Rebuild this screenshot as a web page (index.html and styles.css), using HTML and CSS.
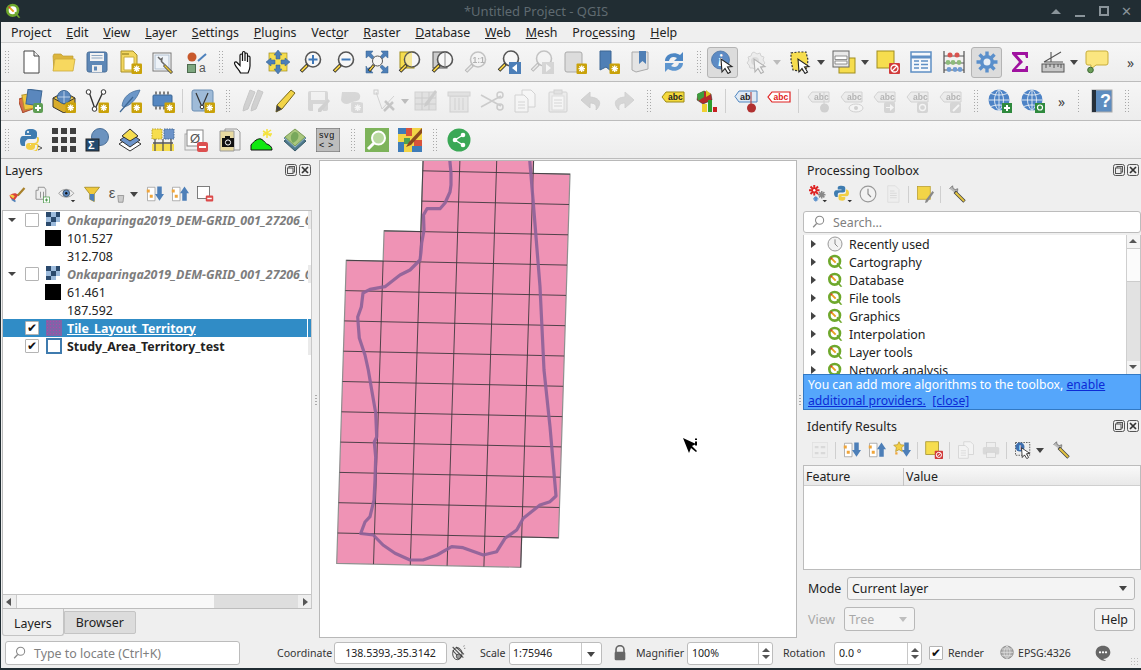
FILE: index.html
```html
<!DOCTYPE html>
<html lang="en">
<head>
    <meta charset="UTF-8">
    <title>*Untitled Project - QGIS</title>
    <link rel="stylesheet" href="styles.css">
</head>
<body>
<svg class="defs" xmlns="http://www.w3.org/2000/svg">
    <defs>
        <!-- shared pieces -->
        <g id="mag">
            <circle cx="14" cy="9.5" r="7.5" fill="#f7f7f7" stroke="#555" stroke-width="1.6"/>
            <path d="M8.5 15L2 21.5" stroke="#222" stroke-width="3.6"/>
            <path d="M8 15.5L2.5 21" stroke="#f2cf45" stroke-width="1.8"/>
        </g>
        <g id="gearbadge">
            <rect x="13.5" y="13.5" width="10.5" height="10.5" rx="1" fill="#c9a20a"/>
            <path d="M18.7 15.5v6.5M15.5 18.7h6.5M16.4 16.4l4.6 4.6M21 16.4l-4.6 4.6" stroke="#fff" stroke-width="1.3"/>
        </g>
        <g id="pointer">
            <path d="M10 9l1 13 3-3.500 3 5 2.500-1.500-3-5 4.500-.5z" fill="#fff" stroke="#222" stroke-width="1.100"/>
        </g>
        <g id="abc">
            <path d="M5 3h18v10H5L1 8z" fill="#f4d93c" stroke="#9c8a18"/>
            <text x="7" y="11" class="t8b">abc</text>
        </g>
        <g id="abcgray">
            <path d="M5 3h17v10H5L1 8z" fill="#ddd" stroke="#888"/>
            <text x="7" y="11" class="t8b">abc</text>
        </g>
        <g id="globe">
            <circle cx="11" cy="11" r="10.500" fill="#4d83c6"/>
            <path d="M11 .5v21M.5 11h21M3 4.500c5 2 11 2 16 0M3 17.500c5-2 11-2 16 0M11 .5c-6 5-6 16 0 21M11 .5c6 5 6 16 0 21" fill="none" stroke="#e8eef5" stroke-width=".9"/>
        </g>

        <!-- first toolbar -->
        <symbol id="new" viewBox="0 0 24 24"><path d="M5 1h10l5 5v17H5z" fill="#fff" stroke="#444"/><path d="M15 1v5h5" fill="#eee" stroke="#444"/></symbol>
        <symbol id="open" viewBox="0 0 24 24"><path d="M2 20L1 6l1-2h7l2 2h10v4H2z" fill="#dcb53c" stroke="#bd9c30" stroke-width=".7"/><path d="M1 21l2-12h20l-2 12z" fill="#f7d85f" stroke="#cba93a" stroke-width=".8"/></symbol>
        <symbol id="save" viewBox="0 0 24 24"><rect x="2" y="2" width="20" height="20" rx="2" fill="#5d87b6" stroke="#4a6f98"/><rect x="5" y="3" width="14" height="8" fill="#f3f3f3"/><path d="M6.500 5.500h11M6.500 8h11" stroke="#8da7c2"/><rect x="7" y="15" width="10" height="7" fill="#eee"/><rect x="9" y="16.500" width="3" height="4" fill="#5d87b6"/></symbol>
        <symbol id="saveas" viewBox="0 0 24 24"><path d="M3 1h12l4 4v17H3z" fill="#f3d75f" stroke="#a88f2b"/><path d="M6 7h10v13H6z" fill="#fff" stroke="#c9ad3f"/><path d="M4 3h7v2H4z" fill="#bba33a"/><use href="#gearbadge"/></symbol>
        <symbol id="props" viewBox="0 0 24 24"><rect x="2" y="3" width="18" height="18" fill="#fff" stroke="#777"/><rect x="4" y="5" width="14" height="14" fill="#eef3f8" stroke="#b0bfd0"/><path d="M7 7l2.500 2.500 1.500-1-.5 3 3 3" fill="none" stroke="#666" stroke-width="1.500"/><path d="M13 15l8 8" stroke="#444" stroke-width="3"/><path d="M13.500 15.500l7 7" stroke="#e7c53a" stroke-width="1.600"/></symbol>
        <symbol id="style" viewBox="0 0 24 24"><circle cx="8" cy="7" r="4.500" fill="#c8592c"/><path d="M14 11l8-7" stroke="#4e82bd" stroke-width="2"/><rect x="3.500" y="14.500" width="8" height="8" fill="#7ea77f" stroke="#4d6b4e"/><text x="15" y="22" class="t11">a</text></symbol>
        <symbol id="hand" viewBox="0 0 24 24"><path d="M7.500 23c-1-3-6-7-6-10 0-1.500 2-1.500 3 0l2.500 2.500V5.500c0-2 2.500-2 2.500 0V11V3c0-2 2.500-2 2.500 0v8V4.500c0-2 2.500-2 2.500 0V12V7.500c0-2 2.500-2 2.500 0V16c0 3-1 5-2 7z" fill="#fff" stroke="#111" stroke-width="1.200"/></symbol>
        <symbol id="pansel" viewBox="0 0 24 24"><rect x="3" y="3" width="18" height="18" fill="#f6dd4e" stroke="#a08d1f" stroke-width=".7"/><path d="M12 0l4 5h-2v4h-4V5H8zM12 24l4-5h-2v-4h-4v4H8zM0 12l5-4v2h4v4H5v2zM24 12l-5-4v2h-4v4h4v2z" fill="#4d7fb8" stroke="#35608f" stroke-width=".5"/></symbol>
        <symbol id="zin" viewBox="0 0 24 24"><use href="#mag"/><path d="M14 5v9M9.500 9.500h9" stroke="#3f78b8" stroke-width="2"/></symbol>
        <symbol id="zout" viewBox="0 0 24 24"><use href="#mag"/><path d="M9.500 9.500h9" stroke="#3f78b8" stroke-width="2"/></symbol>
        <symbol id="zfull" viewBox="0 0 24 24"><path d="M1 1h7L6 3.500 9 7 7 9 3.500 6 1 8zM23 1h-7l2 2.500L15 7l2 2 3.500-3L23 8zM23 23h-7l2-2.500-3-3.500 2-2 3.500 3 2.500-2zM1 23l7 0-2-2.500 1-1-2-2-2.500 1L1 16z" fill="#4d7fb8" stroke="#35608f" stroke-width=".5"/><circle cx="12.500" cy="11" r="5" fill="#f5f5f5" stroke="#555"/><path d="M9 15l-5 6" stroke="#222" stroke-width="3"/><path d="M8.500 15.500l-4 5" stroke="#f2cf45" stroke-width="1.500"/></symbol>
        <symbol id="zsel" viewBox="0 0 24 24"><rect x="2" y="2" width="14" height="16" fill="#f6dd4e" stroke="#a08d1f"/><use href="#mag"/><path d="M14 2.500a7 7 0 0 0 0 14z" fill="#f6dd4e" opacity=".55"/></symbol>
        <symbol id="zlayer" viewBox="0 0 24 24"><rect x="2" y="2" width="14" height="16" fill="#ccc" stroke="#555"/><use href="#mag"/><path d="M14 2v15" stroke="#888"/></symbol>
        <symbol id="z11" viewBox="0 0 24 24"><use href="#mag"/><text x="8.500" y="12.500" class="t8b">1:1</text></symbol>
        <symbol id="zlast" viewBox="0 0 24 24"><g transform="translate(0 -1)"><use href="#mag"/></g><rect x="12" y="12" width="12" height="12" fill="#4d7fb8"/><path d="M20 14l-5 4 5 4z" fill="#fff"/></symbol>
        <symbol id="znext" viewBox="0 0 24 24"><g transform="translate(0 -1)"><use href="#mag"/></g><rect x="12" y="12" width="12" height="12" fill="#999"/><path d="M16 14l5 4-5 4z" fill="#fff"/></symbol>
        <symbol id="mapview" viewBox="0 0 24 24"><rect x="2" y="2" width="17" height="20" rx="2" fill="#dcdcdc" stroke="#aaa"/><use href="#gearbadge"/></symbol>
        <symbol id="bookmark" viewBox="0 0 24 24"><path d="M4 1h11v20l-5-4-6 3z" fill="#4f7fb5" stroke="#3d6794"/><use href="#gearbadge"/></symbol>
        <symbol id="bookmarks" viewBox="0 0 24 24"><path d="M3 2h16v17l-12 3-4-2z" fill="#e4e4e4" stroke="#aaa"/><path d="M10 1h7v13l-3.500-3-3.500 3z" fill="#4f7fb5"/></symbol>
        <symbol id="refresh" viewBox="0 0 24 24"><path d="M3 11C3 4 12 1 18 5l3-3v9h-9l3-3c-4-2-7-1-8 3z" fill="#4d87c4"/><path d="M21 13c0 7-9 10-15 6l-3 3v-9h9l-3 3c4 2 7 1 8-3z" fill="#5e96cf"/></symbol>
        <symbol id="identify" viewBox="0 0 24 24"><circle cx="9.500" cy="10" r="9" fill="#5d8bc4" stroke="#3d6a9f" stroke-width=".7"/><text x="7" y="16" class="ti">i</text><use href="#pointer"/></symbol>
        <symbol id="run" viewBox="0 0 24 24"><path d="M10 2l3 2 3-1 1 3 3 1-1 3 2 3-2 2-1 3-3 0-3 2-3-2-3 0-1-3-2-2 2-3-1-3 3-1 1-3z" fill="#ddd" stroke="#888"/><circle cx="11" cy="11" r="4" fill="#aaa"/><use href="#pointer"/></symbol>
        <symbol id="select" viewBox="0 0 24 24"><path d="M3 3l7-1h8l2 8-1 8-7 3-7-1-2-9z" fill="#f6dd4e" stroke="#333" stroke-dasharray="2 1.500" stroke-width="1.200"/><use href="#pointer"/></symbol>
        <symbol id="selby" viewBox="0 0 24 24"><rect x="7" y="8" width="16" height="15" fill="#f6dd4e" stroke="#a08d1f"/><rect x="1" y="1" width="16" height="16" fill="#e9e9e9" stroke="#666"/><path d="M3 6h12v3.500H3zM3 11h12v3H3z" fill="#fff" stroke="#777" stroke-width=".8"/></symbol>
        <symbol id="deselect" viewBox="0 0 24 24"><rect x="1" y="1" width="17" height="17" fill="#f6dd4e" stroke="#a08d1f"/><rect x="13" y="13" width="11" height="11" rx="1" fill="#d13b3b"/><circle cx="18.500" cy="18.500" r="3.500" fill="none" stroke="#fff" stroke-width="1.300"/><path d="M16 21l5-5" stroke="#fff" stroke-width="1.300"/></symbol>
        <symbol id="table" viewBox="0 0 24 24"><rect x="2" y="2" width="20" height="20" fill="#f5f8fb" stroke="#5e8fc4" stroke-width="1.500"/><path d="M2 7h20" stroke="#5e8fc4" stroke-width="3"/><path d="M5 11h5M12 11h7M5 14.500h5M12 14.500h7M5 18h5M12 18h7" stroke="#5e8fc4" stroke-width="1.500"/></symbol>
        <symbol id="stats" viewBox="0 0 24 24"><path d="M2 1v22M22 1v22" stroke="#333"/><path d="M2 6h20M2 13h20M2 20h20" stroke="#555"/><g fill="#d9534f"><circle cx="8" cy="5" r="2.500"/><circle cx="15" cy="5" r="2.500"/></g><g fill="#8dbb7b"><circle cx="6" cy="12.500" r="2.400"/><circle cx="11" cy="12.500" r="2.400"/><circle cx="17" cy="12.500" r="2.400"/></g><g fill="#6f9bd1"><circle cx="7" cy="19.500" r="2.400"/><circle cx="13" cy="19.500" r="2.400"/><circle cx="18" cy="19.500" r="2.400"/></g></symbol>
        <symbol id="gear" viewBox="0 0 24 24"><path d="M12 1.500v21M1.500 12h21M4.500 4.500l15 15M19.500 4.500l-15 15" stroke="#5a8fcb" stroke-width="3.400"/><circle cx="12" cy="12" r="7" fill="#5a8fcb"/><circle cx="12" cy="12" r="3.500" fill="#e7eef6"/></symbol>
        <symbol id="sigma" viewBox="0 0 24 24"><path d="M4 2h16v6h-2l-1-3H9l6 7-7 7h9l1-3h2v6H4v-2l7-8-7-8z" fill="#a012a0"/></symbol>
        <symbol id="measure" viewBox="0 0 24 24"><path d="M3 12L20 2M10 2v10M3 12h19" stroke="#555" stroke-width="1.100" fill="none"/><rect x="1" y="14" width="22" height="8" fill="#c7c7c7" stroke="#555"/><path d="M5 14v4M9 14v3M13 14v4M17 14v3M20 14v4" stroke="#555"/></symbol>
        <symbol id="annot" viewBox="0 0 24 24"><path d="M3 1h18a2 2 0 0 1 2 2v10a2 2 0 0 1-2 2H11l-5 4v-4H3a2 2 0 0 1-2-2V3a2 2 0 0 1 2-2z" fill="#fbe680" stroke="#c7ad3a"/><circle cx="5.500" cy="20" r="2.800" fill="#6b9e58" stroke="#3e6a34"/></symbol>
        <!-- second toolbar -->
        <symbol id="dsm" viewBox="0 0 24 24"><rect x="1" y="8" width="12" height="14" transform="rotate(-20 7 15)" fill="#d86e4a" stroke="#a84c2e"/><rect x="4" y="5" width="13" height="15" transform="rotate(-10 10 12)" fill="#f0c640" stroke="#b3942b"/><rect x="8" y="1" width="14" height="15" transform="rotate(8 15 8)" fill="#5a87bd" stroke="#3d6794"/><rect x="14" y="14" width="10" height="10" rx="2" fill="#5f9e54"/><path d="M19 16v6M16 19h6" stroke="#fff" stroke-width="2"/></symbol>
        <symbol id="geopkg" viewBox="0 0 24 24"><path d="M1 9l11-6 11 6v9l-11 6-11-6z" fill="#d8ac2a" stroke="#333"/><path d="M1 9l11 6 11-6" fill="#f1d25a" stroke="#333"/><circle cx="12" cy="8" r="6.500" fill="#5a87bd" stroke="#3d6794"/><path d="M12 2v12M6 8h12" stroke="#cfe0f2" stroke-width=".8"/><use href="#gearbadge"/></symbol>
        <symbol id="newvec" viewBox="0 0 24 24"><path d="M4 3l6 17L18 3" fill="none" stroke="#333" stroke-width="1.400"/><circle cx="3.500" cy="3" r="2.300" fill="#fff" stroke="#333"/><circle cx="18.500" cy="3" r="2.300" fill="#fff" stroke="#333"/><circle cx="9.500" cy="20" r="2.300" fill="#fff" stroke="#333"/><use href="#gearbadge"/></symbol>
        <symbol id="feather" viewBox="0 0 24 24"><path d="M22 1C12 2 5 8 4 17l2 1c6-1 13-8 16-17z" fill="#6c97c8" stroke="#3d6794" stroke-width=".7"/><path d="M2 23L15 8" stroke="#3d6794" stroke-width="1.200"/><use href="#gearbadge"/></symbol>
        <symbol id="chip" viewBox="0 0 24 24"><rect x="2" y="6" width="19" height="11" rx="1" fill="#5587c1" stroke="#3d6794"/><path d="M5 2.500v3M9 2.500v3M13 2.500v3M17 2.500v3M5 17.500v3M9 17.500v3M13 17.500v3" stroke="#444" stroke-width="1.300"/><use href="#gearbadge"/></symbol>
        <symbol id="vlayer" viewBox="0 0 24 24"><rect x="1" y="1" width="21" height="21" rx="2" fill="#9fbbd8" stroke="#6b8eb3"/><path d="M5 4l6 14 6-14" fill="none" stroke="#333" stroke-width="1.200"/><circle cx="11" cy="18" r="1.800" fill="#fff" stroke="#333"/><use href="#gearbadge"/></symbol>
        <symbol id="edits" viewBox="0 0 24 24"><path d="M10 1l5 2-7 17-5 2 1-5zM18 1l5 2-7 17-5 2 1-5z" fill="#888" stroke="#666"/></symbol>
        <symbol id="pencil" viewBox="0 0 24 24"><path d="M18 1l4 3L9 20l-6 3 1-7z" fill="#f2d447" stroke="#77681c"/><path d="M4 16l5 4-6 3z" fill="#444"/></symbol>
        <symbol id="saveedit" viewBox="0 0 24 24"><rect x="2" y="2" width="20" height="20" rx="2" fill="#999"/><rect x="5" y="3" width="14" height="8" fill="#eee"/><rect x="7" y="15" width="10" height="7" fill="#eee"/><path d="M22 10l2 2-9 11h-3v-3z" fill="#888"/></symbol>
        <symbol id="addfeat" viewBox="0 0 24 24"><path d="M3 3h13c4 0 6 3 5 6-1 4-7 3-10 5-3 2-8 1-9-3z" fill="#999"/><rect x="12" y="13" width="10" height="10" rx="1" fill="#aaa"/><use href="#gearbadge"/></symbol>
        <symbol id="vertex" viewBox="0 0 24 24"><path d="M4 3l6 17L22 7" fill="none" stroke="#888"/><rect x="2" y="1" width="4" height="4" fill="none" stroke="#777"/><path d="M12 22l9-9M13 12l9 9" stroke="#666" stroke-width="2.500"/></symbol>
        <symbol id="modify" viewBox="0 0 24 24"><rect x="1" y="3" width="21" height="18" fill="#bbb" stroke="#888"/><path d="M1 9h21M1 15h21M8 3v18M15 3v18" stroke="#777"/><path d="M21 1l2 2-9 13-4 2 1-4z" fill="#777"/></symbol>
        <symbol id="del" viewBox="0 0 24 24"><rect x="3" y="7" width="18" height="16" fill="#ccc" stroke="#888"/><rect x="1" y="3" width="22" height="4" fill="#bbb" stroke="#888"/><path d="M8 9v12M12 9v12M16 9v12" stroke="#c77"/></symbol>
        <symbol id="cut" viewBox="0 0 24 24"><path d="M1 6l20 11M1 18L21 7" stroke="#777" stroke-width="1.600"/><circle cx="20" cy="6" r="3" fill="none" stroke="#777" stroke-width="1.500"/><circle cx="20" cy="18" r="3" fill="none" stroke="#777" stroke-width="1.500"/></symbol>
        <symbol id="copy" viewBox="0 0 24 24"><path d="M9 1h9l4 4v13H9z" fill="#fff" stroke="#888"/><path d="M2 6h9l4 4v13H2z" fill="#fff" stroke="#888"/><path d="M5 13h7M5 16h7M5 19h7" stroke="#999"/></symbol>
        <symbol id="paste" viewBox="0 0 24 24"><rect x="3" y="3" width="18" height="20" rx="1" fill="#ddd" stroke="#888"/><rect x="8" y="1" width="8" height="4" fill="#bbb" stroke="#888"/><rect x="6" y="7" width="12" height="14" fill="#fff" stroke="#aaa"/><path d="M8 11h8M8 14h8M8 17h8" stroke="#999"/></symbol>
        <symbol id="undo" viewBox="0 0 24 24"><path d="M11 3L2 11l9 8v-5c5 0 7 2 6 7 6-6 5-12-6-13z" fill="#a88" stroke="#877"/></symbol>
        <symbol id="redo" viewBox="0 0 24 24"><path d="M13 3l9 8-9 8v-5c-5 0-7 2-6 7-6-6-5-12 6-13z" fill="#999" stroke="#888"/></symbol>
        <symbol id="labely" viewBox="0 0 24 24"><use href="#abc"/></symbol>
        <symbol id="diagram" viewBox="0 0 24 24"><path d="M10 2l7 3 1 6-9 4-6-4 1-6z" fill="#b52a2a" stroke="#222" stroke-width=".5"/><path d="M3 5l7-3v6l-6 4z" fill="#3e9e3e"/><path d="M12 1l5 4-5 3z" fill="#e0c020"/><rect x="8" y="15" width="5" height="8" fill="#f0d030"/><rect x="14" y="11" width="4" height="12" fill="#2e9e2e"/><rect x="19" y="18" width="4" height="5" fill="#c62020"/></symbol>
        <symbol id="pinlabel" viewBox="0 0 24 24"><path d="M5 2h18v11H5L1 7.500z" fill="#dfe9f4" stroke="#4e85c0"/><text x="6" y="11" class="t9b">ab</text><path d="M17 3v12" stroke="#a33"/><circle cx="17.500" cy="19" r="4.500" fill="#b03030"/></symbol>
        <symbol id="redlabel" viewBox="0 0 24 24"><path d="M5 3h18v10H5L1 8z" fill="#fff" stroke="#e02020" stroke-width="1.200"/><text x="6.500" y="11" class="t8b red">abc</text></symbol>
        <symbol id="lab1" viewBox="0 0 24 24"><use href="#abcgray"/><path d="M17 3v12" stroke="#888"/><circle cx="17.500" cy="19" r="4.500" fill="#888"/></symbol>
        <symbol id="lab2" viewBox="0 0 24 24"><use href="#abcgray"/><ellipse cx="16" cy="19" rx="7" ry="4" fill="#fff" stroke="#888"/><circle cx="16" cy="19" r="2" fill="#888"/></symbol>
        <symbol id="lab3" viewBox="0 0 24 24"><use href="#abcgray"/><rect x="11" y="13" width="11" height="11" rx="2" fill="#999"/><path d="M13 18h4v-3l4 3.500-4 3.500v-3h-4z" fill="#fff"/></symbol>
        <symbol id="lab4" viewBox="0 0 24 24"><use href="#abcgray"/><rect x="11" y="13" width="11" height="11" rx="2" fill="#999"/><circle cx="16.500" cy="18.500" r="3" fill="none" stroke="#fff" stroke-width="1.300"/></symbol>
        <symbol id="lab5" viewBox="0 0 24 24"><use href="#abcgray"/><rect x="11" y="13" width="11" height="11" rx="2" fill="#999"/><path d="M14 22l6-6" stroke="#fff" stroke-width="2"/></symbol>
        <symbol id="globeplus" viewBox="0 0 24 24"><use href="#globe"/><rect x="14" y="14" width="10" height="10" fill="#2f8a3e"/><path d="M19 16v6M16 19h6" stroke="#fff" stroke-width="2"/></symbol>
        <symbol id="globezoom" viewBox="0 0 24 24"><use href="#globe"/><rect x="14" y="14" width="10" height="10" fill="#2f8a3e"/><circle cx="19" cy="18.500" r="2.500" fill="none" stroke="#fff" stroke-width="1.200"/></symbol>
        <symbol id="help" viewBox="0 0 24 24"><rect x="2" y="1" width="20" height="22" fill="#5d8cbf" stroke="#aaa"/><rect x="2" y="1" width="4" height="22" fill="#26303a"/><text x="10" y="18" class="t14b">?</text></symbol>
        <!-- third toolbar -->
        <symbol id="python" viewBox="0 0 24 24"><path d="M12 1c-5 0-6 2-6 4v2h6v1H4c-2 0-3 2-3 5s1 5 3 5h2v-3c0-2 2-4 4-4h5c2 0 3-1 3-3V5c0-2-2-4-6-4z" fill="#3f7cb0"/><path d="M12 23c5 0 6-2 6-4v-2h-6v-1h7l1 2-2 5z" fill="#f2cf45"/><path d="M18 9v3c0 2-1 3-3 3h-5c-2 0-3 1-3 3v1c0 2 2 3 5 3 2 0 4-1 4-3v-2h-5v-1h6c2 0 3-3 3-5s-1-2-2-2z" fill="#f2cf45"/><circle cx="9" cy="4" r="1.100" fill="#fff"/><path d="M19 18l4 2-4 2" fill="none" stroke="#555"/></symbol>
        <symbol id="grid" viewBox="0 0 24 24"><path d="M0 0h6v6H0zM9 0h6v6H9zM18 0h6v6h-6zM0 9h6v6H0zM9 9h6v6H9zM18 9h6v6h-6zM0 18h6v6H0zM9 18h6v6H9zM18 18h6v6h-6z" fill="#404040"/></symbol>
        <symbol id="sumlayer" viewBox="0 0 24 24"><circle cx="15" cy="9" r="8.500" fill="#6c93bf" stroke="#4a6f98"/><rect x="1" y="11" width="13" height="12" fill="#234a70" stroke="#222"/><text x="3" y="21" class="t11w">Σ</text></symbol>
        <symbol id="stack" viewBox="0 0 24 24"><path d="M12 9l11 7-11 7-11-7z" fill="#fff" stroke="#333"/><path d="M12 5l10 7-10 7-10-7z" fill="#6c93c9" stroke="#333"/><path d="M12 1l8 7-8 5-8-5z" fill="#f6dd4e" stroke="#333"/></symbol>
        <symbol id="hatch" viewBox="0 0 24 24"><rect x="1" y="1" width="10" height="10" fill="#f6dd4e" stroke="#b8a22c" stroke-dasharray="1.500 1"/><rect x="13" y="1" width="10" height="10" fill="#6c93c9" stroke="#4a6f98" stroke-dasharray="1.500 1"/><rect x="1" y="16" width="22" height="7" fill="#f6dd4e"/><path d="M4 11v12M12 11v12M20 11v12M2 15h20" stroke="#555" stroke-width="1.300"/></symbol>
        <symbol id="nullsym" viewBox="0 0 24 24"><rect x="1" y="6" width="16" height="16" fill="none" stroke="#aaa"/><rect x="3" y="2" width="16" height="16" fill="#fff" stroke="#888"/><text x="6" y="15" class="t13">Ø</text><rect x="13" y="14" width="11" height="10" rx="2" fill="#dc5050"/><path d="M15 19h7" stroke="#fff" stroke-width="2"/></symbol>
        <symbol id="camera" viewBox="0 0 24 24"><path d="M8 1h12l3 3v18H8z" fill="#eee" stroke="#999"/><path d="M3 3h14v20H3z" fill="#e7d9a0" stroke="#999"/><rect x="5" y="10" width="12" height="9" fill="#111"/><rect x="8" y="8" width="5" height="2" fill="#111"/><circle cx="11" cy="14.500" r="2.600" fill="none" stroke="#fff"/></symbol>
        <symbol id="hill" viewBox="0 0 24 24"><path d="M1 22v-5c3-4 7-7 10-6 3 1 4 5 8 6 2 1 3 3 3 5z" fill="#12e812" stroke="#111"/><path d="M17 1v9M13 3l8 5M21 2l-8 6M13 6h9" stroke="#f4e23c" stroke-width="1.500"/></symbol>
        <symbol id="layers3" viewBox="0 0 24 24"><path d="M12 6l11 7-11 10L1 13z" fill="#4d7a8c" stroke="#395a68"/><path d="M12 3l11 7-11 10L1 10z" fill="#8fb5c9" stroke="#5d8299"/><path d="M12 1l10 8-10 9L2 9z" fill="#a9c77e" stroke="#7f9f58"/><path d="M11 4c5-1 6 5 2 9l-3 2c-3-3-3-9 1-11z" fill="#78a85c"/></symbol>
        <symbol id="svgbox" viewBox="0 0 24 24"><rect x="0" y="0" width="24" height="24" fill="#bdbdbd" stroke="#666"/><text x="3" y="10" class="t9">svg</text><text x="3" y="20" class="t9">&lt; &gt;</text></symbol>
        <symbol id="greenmag" viewBox="0 0 24 24"><rect width="24" height="24" fill="#7db35a"/><circle cx="13.500" cy="10" r="6.500" fill="#b9d9a0" stroke="#fff" stroke-width="2"/><path d="M9 15l-6 6" stroke="#fff" stroke-width="3"/></symbol>
        <symbol id="palette" viewBox="0 0 24 24"><rect x="0" y="0" width="24" height="24" fill="#f2d447"/><path d="M0 0h8v6H0zM0 14h6v10H0zM14 18h10v6H14z" fill="#3f7cb8"/><path d="M8 0h6v8H8zM16 12h8v6h-8z" fill="#d9533a"/><path d="M6 10h6v6H6z" fill="#4fa24f"/><path d="M24 0L11 14l-3 5 5-2L24 5z" fill="#8a4a20"/></symbol>
        <symbol id="share" viewBox="0 0 24 24"><circle cx="12" cy="12" r="11.500" fill="#3aa856"/><path d="M16 7l-8 5 8 5" fill="none" stroke="#fff" stroke-width="1.400"/><circle cx="16" cy="7" r="2.300" fill="#fff"/><circle cx="8" cy="12" r="2.300" fill="#fff"/><circle cx="16" cy="17" r="2.300" fill="#fff"/></symbol>
        <!-- dock toolbars -->
        <symbol id="brush" viewBox="0 0 24 24"><path d="M2 14c5-4 8-4 12-1l-5 7c-3 1-6-2-7-6z" fill="#d9433a"/><path d="M2 14c3-2 5-1 7 1l-2 3z" fill="#f2cf45"/><path d="M13 14l9-10" stroke="#a8802a" stroke-width="3"/><path d="M5 19l5 3" stroke="#4d7fb8" stroke-width="2"/></symbol>
        <symbol id="addgroup" viewBox="0 0 24 24"><path d="M7 3h8l2 3v13H4V7h3z" fill="#eee" stroke="#777"/><path d="M10 9v8M14 9v8" stroke="#777"/><rect x="14" y="16" width="8" height="8" fill="#fff" stroke="#4e9a4e"/><path d="M18 18v4M16 20h4" stroke="#4e9a4e" stroke-width="1.500"/></symbol>
        <symbol id="eye" viewBox="0 0 24 24"><path d="M1 11c5-7 15-7 20 0-5 7-15 7-20 0z" fill="#eee" stroke="#888"/><circle cx="11" cy="11" r="4.500" fill="#5d8bc4" stroke="#345"/><circle cx="11" cy="11" r="1.600" fill="#111"/><path d="M17 20l3 3 3-3z" fill="#333"/></symbol>
        <symbol id="filter" viewBox="0 0 24 24"><path d="M2 3h20l-7 9v10l-6-3v-7z" fill="#efc93c" stroke="#9c8418"/><path d="M9 12h6v10l-6-3z" fill="#4d7fb8"/></symbol>
        <symbol id="epsilon" viewBox="0 0 24 24"><text x="1" y="17" class="t18">ε</text><path d="M13 14h8l-1 9h-6z" fill="#ccc" stroke="#888"/></symbol>
        <symbol id="expand" viewBox="0 0 24 24"><path d="M2 3h10v18H2z" fill="#fff" stroke="#999"/><rect x="1" y="6" width="4" height="4" fill="#f0a53a"/><rect x="5" y="13" width="4" height="4" fill="#f0a53a"/><path d="M16 2h6v10h3l-6 9-6-9h3z" fill="#4d7fb8" transform="translate(-1 0)"/></symbol>
        <symbol id="collapse" viewBox="0 0 24 24"><path d="M2 3h10v18H2z" fill="#fff" stroke="#999"/><rect x="1" y="6" width="4" height="4" fill="#f0a53a"/><rect x="5" y="13" width="4" height="4" fill="#f0a53a"/><path d="M15 21h6V11h3l-6-9-6 9h3z" fill="#4d7fb8"/></symbol>
        <symbol id="starexp" viewBox="0 0 24 24"><path d="M8 1l2 4 5 .5-3.500 3.500 1 5L8 11.500 3.500 14l1-5L1 5.500 6 5z" fill="#f2cf45" stroke="#b8962a"/><rect x="3" y="15" width="3" height="3" fill="#f0a53a"/><path d="M16 2h6v10h3l-6 9-6-9h3z" fill="#4d7fb8" transform="translate(-1 0)"/></symbol>
        <symbol id="remove" viewBox="0 0 24 24"><rect x="2" y="2" width="16" height="16" fill="#fff" stroke="#555"/><rect x="13" y="14" width="10" height="8" rx="1.500" fill="#dc4a4a"/><path d="M15 18h6" stroke="#fff" stroke-width="2"/></symbol>
        <symbol id="procgear" viewBox="0 0 24 24"><path d="M7 0v14M0 7h14M2 2l10 10M12 2L2 12" stroke="#d22" stroke-width="2.600"/><circle cx="7" cy="7" r="1.600" fill="#fff"/><path d="M17 8v10M12 13h10M13.500 9.500l7 7M20.500 9.500l-7 7" stroke="#888" stroke-width="2"/><path d="M9 15v7M5.500 18.500h7M7 16l4 5M11 16l-4 5" stroke="#5a8fcb" stroke-width="1.600"/><path d="M18 20l3 3 3-3z" fill="#333"/></symbol>
        <symbol id="pydd" viewBox="0 0 24 24"><path d="M10 1c-5 0-5 2-5 3v2h5v1H3c-2 0-3 2-3 4s1 5 3 5h2v-3c0-2 1-3 3-3h4c2 0 3-1 3-3V4c0-2-2-3-5-3z" fill="#3f7cb0"/><path d="M16 6v3c0 2-1 3-3 3H9c-2 0-3 1-3 3v3c0 2 2 3 5 3s4-2 4-3v-2h-5v-1h7c2 0 3-2 3-4s-1-5-3-5z" fill="#f2cf45"/><path d="M18 20l3 3 3-3z" fill="#333"/></symbol>
        <symbol id="clock" viewBox="0 0 24 24"><circle cx="12" cy="12" r="10.500" fill="#f2f2f2" stroke="#999" stroke-width="1.500"/><path d="M12 5v7l4 4" fill="none" stroke="#888" stroke-width="1.500"/></symbol>
        <symbol id="docsmall" viewBox="0 0 24 24"><path d="M5 1h10l5 5v17H5z" fill="#eee" stroke="#aaa"/><path d="M8 8h6M8 11h9M8 14h9M8 17h9" stroke="#aaa" stroke-width="1.400"/></symbol>
        <symbol id="note" viewBox="0 0 24 24"><rect x="2" y="2" width="17" height="17" fill="#f2d447" stroke="#b89c2c"/><path d="M22 8l2 2-9 13-3 1 1-4z" fill="#888"/></symbol>
        <symbol id="wrench" viewBox="0 0 24 24"><path d="M2 5l4-4 1 4 3 1 3-1c0 4-1 5-3 6" fill="#bbb" stroke="#666"/><path d="M9 9l13 13" stroke="#444" stroke-width="4.500"/><path d="M10 10l11.500 11.500" stroke="#e6c640" stroke-width="2.600"/></symbol>
        <symbol id="treeview" viewBox="0 0 24 24"><rect x="2" y="2" width="20" height="20" fill="#eee" stroke="#bbb"/><path d="M5 8h5M5 16h5M13 8h6M13 16h6" stroke="#aaa" stroke-width="3"/></symbol>
        <symbol id="print" viewBox="0 0 24 24"><rect x="6" y="2" width="12" height="7" fill="#eee" stroke="#888"/><rect x="1" y="8" width="22" height="10" rx="2" fill="#aaa"/><rect x="6" y="15" width="12" height="7" fill="#eee" stroke="#888"/></symbol>
        <symbol id="selid" viewBox="0 0 24 24"><rect x="2" y="2" width="19" height="17" fill="#eee" stroke="#333" stroke-dasharray="2 1.500"/><circle cx="8" cy="8" r="6" fill="#3d6fae"/><text x="6.500" y="12" class="t9w">i</text><use href="#pointer"/></symbol>
        <!-- status bar -->
        <symbol id="mouse" viewBox="0 0 24 24"><path d="M4 3l16 16M9 3l12 11M4 8l11 12" stroke="#555" stroke-width="1.600"/><ellipse cx="11" cy="13" rx="7" ry="9" fill="none" stroke="#333" stroke-width="1.300"/><circle cx="13" cy="17" r="3.500" fill="#999" stroke="#222"/><path d="M20 2l2-1M21 5l2 0" stroke="#555"/></symbol>
        <symbol id="lock" viewBox="0 0 24 24"><path d="M6 11V7a6 6 0 0 1 12 0v4" fill="none" stroke="#666" stroke-width="2.400"/><rect x="4" y="10" width="16" height="13" rx="2" fill="#666"/></symbol>
        <symbol id="wgs" viewBox="0 0 24 24"><circle cx="12" cy="11" r="9.500" fill="#aaa" stroke="#777"/><path d="M12 1.500v19M2.500 11h19M4 6h16M4 16h16M12 1.500c-6 5-6 14 0 19M12 1.500c6 5 6 14 0 19" fill="none" stroke="#eee" stroke-width=".9"/></symbol>
        <symbol id="chat" viewBox="0 0 24 24"><path d="M12 1c6 0 11 4 11 10s-5 10-11 10l5 3c-5 0-10-2-12-5-3-2-4-5-4-8C1 5 6 1 12 1z" fill="#666"/><circle cx="7.500" cy="11" r="1.700" fill="#fff"/><circle cx="12" cy="11" r="1.700" fill="#fff"/><circle cx="16.500" cy="11" r="1.700" fill="#fff"/></symbol>
        <symbol id="qlogo" viewBox="0 0 24 24"><circle cx="11.500" cy="11" r="8" fill="#fff" stroke="#6ea82c" stroke-width="4"/><path d="M7 7l6 6" stroke="#e8a020" stroke-width="3"/><circle cx="6.500" cy="6.500" r="1.600" fill="#d9472e"/><path d="M14 15l6 7h3l-7-9z" fill="#6ea82c"/></symbol>
        <symbol id="search" viewBox="0 0 24 24"><circle cx="13" cy="9" r="7" fill="none" stroke="#8a8a8a" stroke-width="1.800"/><path d="M8 14.500L2 21" stroke="#8a8a8a" stroke-width="2.200"/></symbol>
        <symbol id="raster" viewBox="0 0 16 16"><rect x="0" y="0" width="5" height="5" fill="#2b4a6d"/><rect x="5" y="5" width="5" height="5" fill="#2b4a6d"/><rect x="0" y="10" width="5" height="4" fill="#2b4a6d"/><rect x="10" y="0" width="4" height="5" fill="#2b4a6d"/><rect x="5" y="0" width="5" height="5" fill="#9dbbdc"/><rect x="0" y="5" width="5" height="5" fill="#9dbbdc"/><rect x="10" y="5" width="4" height="5" fill="#9dbbdc"/><rect x="5" y="10" width="5" height="4" fill="#9dbbdc"/></symbol>
        <pattern id="tile-dots" width="3" height="3" patternUnits="userSpaceOnUse"><rect width="3" height="3" fill="#8064a8"/><rect x="1" y="1" width="1" height="1" fill="#b545a8"/></pattern>
        <symbol id="dockfloat" viewBox="0 0 12 12"><rect x=".5" y=".5" width="11" height="11" rx="2" fill="#eee" stroke="#555"/><rect x="4" y="2.500" width="5.500" height="5.500" fill="none" stroke="#555"/><rect x="2.500" y="4" width="5.500" height="5.500" fill="#eee" stroke="#555"/></symbol>
        <symbol id="dockclose" viewBox="0 0 12 12"><rect x=".5" y=".5" width="11" height="11" rx="2" fill="#eee" stroke="#555"/><path d="M3 3l6 6M9 3l-6 6" stroke="#333" stroke-width="1.700"/></symbol>
    </defs>
</svg>

<div class="window">
    <div class="titlebar">
        <svg class="logo"><use href="#qlogo"/></svg>
        <div class="title">*Untitled Project - QGIS</div>
        <div class="wm">
            <span class="wm-up"></span>
            <span class="wm-min"></span>
            <span class="wm-max"></span>
            <span class="wm-close">✕</span>
        </div>
    </div>

    <div class="app">
        <div class="menubar">
            <span>Pro<u>j</u>ect</span>
            <span><u>E</u>dit</span>
            <span><u>V</u>iew</span>
            <span><u>L</u>ayer</span>
            <span><u>S</u>ettings</span>
            <span><u>P</u>lugins</span>
            <span>Vect<u>o</u>r</span>
            <span><u>R</u>aster</span>
            <span><u>D</u>atabase</span>
            <span><u>W</u>eb</span>
            <span><u>M</u>esh</span>
            <span>Pro<u>c</u>essing</span>
            <span><u>H</u>elp</span>
        </div>

        <div class="toolbar">
            <i class="grip first"></i>
            <b class="tool"><svg><use href="#new"/></svg></b>
            <b class="tool"><svg><use href="#open"/></svg></b>
            <b class="tool"><svg><use href="#save"/></svg></b>
            <b class="tool"><svg><use href="#saveas"/></svg></b>
            <b class="tool"><svg><use href="#props"/></svg></b>
            <b class="tool"><svg><use href="#style"/></svg></b>
            <i class="grip"></i>
            <b class="tool"><svg><use href="#hand"/></svg></b>
            <b class="tool"><svg><use href="#pansel"/></svg></b>
            <b class="tool"><svg><use href="#zin"/></svg></b>
            <b class="tool"><svg><use href="#zout"/></svg></b>
            <b class="tool"><svg><use href="#zfull"/></svg></b>
            <b class="tool"><svg><use href="#zsel"/></svg></b>
            <b class="tool"><svg><use href="#zlayer"/></svg></b>
            <b class="tool off"><svg><use href="#z11"/></svg></b>
            <b class="tool"><svg><use href="#zlast"/></svg></b>
            <b class="tool off"><svg><use href="#znext"/></svg></b>
            <b class="tool"><svg><use href="#mapview"/></svg></b>
            <b class="tool"><svg><use href="#bookmark"/></svg></b>
            <b class="tool"><svg><use href="#bookmarks"/></svg></b>
            <b class="tool"><svg><use href="#refresh"/></svg></b>
            <i class="grip"></i>
            <b class="tool on"><svg><use href="#identify"/></svg></b>
            <b class="tool off"><svg><use href="#run"/></svg></b>
            <i class="dd off"></i>
            <b class="tool"><svg><use href="#select"/></svg></b>
            <i class="dd"></i>
            <b class="tool"><svg><use href="#selby"/></svg></b>
            <i class="dd"></i>
            <b class="tool"><svg><use href="#deselect"/></svg></b>
            <b class="tool"><svg><use href="#table"/></svg></b>
            <b class="tool"><svg><use href="#stats"/></svg></b>
            <b class="tool on"><svg><use href="#gear"/></svg></b>
            <b class="tool"><svg><use href="#sigma"/></svg></b>
            <b class="tool"><svg><use href="#measure"/></svg></b>
            <i class="dd"></i>
            <b class="tool"><svg><use href="#annot"/></svg></b>
            <span class="more">»</span>
        </div>

        <div class="toolbar">
            <i class="grip first"></i>
            <b class="tool"><svg><use href="#dsm"/></svg></b>
            <b class="tool"><svg><use href="#geopkg"/></svg></b>
            <b class="tool"><svg><use href="#newvec"/></svg></b>
            <b class="tool"><svg><use href="#feather"/></svg></b>
            <b class="tool"><svg><use href="#chip"/></svg></b>
            <i class="sep"></i>
            <b class="tool"><svg><use href="#vlayer"/></svg></b>
            <i class="grip"></i>
            <b class="tool off"><svg><use href="#edits"/></svg></b>
            <b class="tool"><svg><use href="#pencil"/></svg></b>
            <b class="tool off"><svg><use href="#saveedit"/></svg></b>
            <b class="tool off"><svg><use href="#addfeat"/></svg></b>
            <b class="tool off"><svg><use href="#vertex"/></svg></b>
            <i class="dd off tight"></i>
            <b class="tool off"><svg><use href="#modify"/></svg></b>
            <b class="tool off"><svg><use href="#del"/></svg></b>
            <b class="tool off"><svg><use href="#cut"/></svg></b>
            <b class="tool off"><svg><use href="#copy"/></svg></b>
            <b class="tool off"><svg><use href="#paste"/></svg></b>
            <b class="tool off"><svg><use href="#undo"/></svg></b>
            <b class="tool off"><svg><use href="#redo"/></svg></b>
            <i class="grip"></i>
            <b class="tool"><svg><use href="#labely"/></svg></b>
            <b class="tool"><svg><use href="#diagram"/></svg></b>
            <i class="sep"></i>
            <b class="tool"><svg><use href="#pinlabel"/></svg></b>
            <b class="tool"><svg><use href="#redlabel"/></svg></b>
            <i class="sep"></i>
            <b class="tool off"><svg><use href="#lab1"/></svg></b>
            <b class="tool off"><svg><use href="#lab2"/></svg></b>
            <b class="tool off"><svg><use href="#lab3"/></svg></b>
            <b class="tool off"><svg><use href="#lab4"/></svg></b>
            <b class="tool off"><svg><use href="#lab5"/></svg></b>
            <i class="grip"></i>
            <b class="tool"><svg><use href="#globeplus"/></svg></b>
            <b class="tool"><svg><use href="#globezoom"/></svg></b>
            <span class="more mid">»</span>
            <i class="grip tiny"></i>
            <b class="tool"><svg><use href="#help"/></svg></b>
            <i class="grip"></i>
        </div>

        <div class="toolbar short">
            <i class="grip first"></i>
            <b class="tool"><svg><use href="#python"/></svg></b>
            <b class="tool"><svg><use href="#grid"/></svg></b>
            <b class="tool"><svg><use href="#sumlayer"/></svg></b>
            <b class="tool"><svg><use href="#stack"/></svg></b>
            <b class="tool"><svg><use href="#hatch"/></svg></b>
            <b class="tool"><svg><use href="#nullsym"/></svg></b>
            <b class="tool"><svg><use href="#camera"/></svg></b>
            <b class="tool"><svg><use href="#hill"/></svg></b>
            <b class="tool"><svg><use href="#layers3"/></svg></b>
            <b class="tool"><svg><use href="#svgbox"/></svg></b>
            <i class="grip"></i>
            <b class="tool"><svg><use href="#greenmag"/></svg></b>
            <b class="tool"><svg><use href="#palette"/></svg></b>
            <i class="grip"></i>
            <b class="tool"><svg><use href="#share"/></svg></b>
        </div>

        <div class="main">
            <div class="dock left-dock">
                <div class="dock-title">
                    <span>Layers</span>
                    <svg><use href="#dockfloat"/></svg>
                    <svg><use href="#dockclose"/></svg>
                </div>
                <div class="dock-tools layers-tools">
                    <b class="mini"><svg><use href="#brush"/></svg></b>
                    <b class="mini"><svg><use href="#addgroup"/></svg></b>
                    <b class="mini"><svg><use href="#eye"/></svg></b>
                    <b class="mini"><svg><use href="#filter"/></svg></b>
                    <b class="mini"><svg><use href="#epsilon"/></svg></b>
                    <i class="dd small"></i>
                    <b class="mini"><svg><use href="#expand"/></svg></b>
                    <b class="mini"><svg><use href="#collapse"/></svg></b>
                    <b class="mini"><svg><use href="#remove"/></svg></b>
                </div>
                <div class="layer-box">
                    <div class="layer-rows">
                        <div class="row layer">
                            <i class="twist"></i><i class="check"></i>
                            <svg class="swatch"><use href="#raster"/></svg>
                            <span class="name dim">Onkaparinga2019_DEM-GRID_001_27206_0001</span>
                        </div>
                        <div class="row"><i class="black"></i><span>101.527</span></div>
                        <div class="row"><i class="blank"></i><span>312.708</span></div>
                        <div class="row layer">
                            <i class="twist"></i><i class="check"></i>
                            <svg class="swatch"><use href="#raster"/></svg>
                            <span class="name dim">Onkaparinga2019_DEM-GRID_001_27206_0002</span>
                        </div>
                        <div class="row"><i class="black"></i><span>61.461</span></div>
                        <div class="row"><i class="blank"></i><span>187.592</span></div>
                        <div class="row layer picked">
                            <i class="notwist"></i><i class="check yes">✔</i>
                            <svg class="swatch" viewBox="0 0 16 16"><rect width="16" height="16" fill="url(#tile-dots)"/></svg>
                            <span class="name"><u>Tile_Layout_Territory</u></span>
                        </div>
                        <div class="row layer">
                            <i class="notwist"></i><i class="check yes">✔</i>
                            <i class="swatch outline"></i>
                            <span class="name">Study_Area_Territory_test</span>
                        </div>
                    </div>
                    <div class="hscroll">
                        <i class="arrow-left"></i>
                        <i class="hthumb"></i>
                        <i class="hgroove"></i>
                        <i class="arrow-right"></i>
                    </div>
                </div>
                <div class="tabs">
                    <span class="tab active">Layers</span>
                    <span class="tab">Browser</span>
                </div>
            </div>

            <div class="splitter"><i></i></div>

            <div class="canvas">
                <svg class="map" viewBox="320 161 476 476">
                    <path class="tiles" d="M423.7 140.7L534.1 143.1L533.2 173.4L570 174.2L558.5 537.800L521.700 537L520.700 567.300L336.700 563.300L346.300 260.300L383.100 261.100L384.100 230.800L420.900 231.600Z"/>
                    <path class="grid" d="M422.700 170.800L570 174.200M421.800 201.100L569 204.500M384.100 230.800L568 234.800M346.300 260.300L567 265.100M345.300 290.600L566 295.400M344.400 320.900L565.100 325.700M343.400 351.200L564.100 356M342.500 381.500L563.100 386.300M341.500 411.800L562.200 416.600M340.500 442.100L561.200 446.900M339.600 472.400L560.200 477.200M338.600 502.700L559.300 507.500M337.700 533L558.500 537.800M383.100 261.100L373.500 564.100"/>
                    <path class="grid" d="M423.700 140.700L410.300 564.900M460.500 141.500L447.100 565.700M497.300 142.300L483.900 566.500M534.100 143.100L520.700 567.300"/>
                    <path class="study" d="M449.300 155L451 173L451 185L450 192L445 203L440 208.700L427 208.700L423.500 215L424 230L421.700 243L421 252L420 260L410 270L400 275L385 286.700L370 289.300L363 293L361.300 307L357.700 317L358.500 328L359.300 338L365 355L368.300 370L371.700 390L375.700 413L376.700 437L374.300 442L375.700 457L375 480L374 500L370 516.700L365 522L360.700 533.500L373.300 535L383 545L395 553.300L410 560L423 560L437 555L451.700 546.700L463 547.700L483.300 555L496.700 551.700L505 538.300L516.700 530L523.300 518.300L540 505L550 501.700L556 496L550 426.700L544 370L540 286.700L533.300 203L529.300 155"/>
                </svg>
                <div class="mouse-cursor">
                    <svg viewBox="0 0 16 16"><path d="M1 1l6 15 2-5 5 4 1-1-5-5 4-2z" fill="#000"/><path d="M13 1.500h2v1.500h-2zM13 4.500h2v4h-2z" fill="#000"/></svg>
                </div>
            </div>

            <div class="splitter right"><i></i></div>

            <div class="dock right-dock">
                <div class="dock-title">
                    <span>Processing Toolbox</span>
                    <svg><use href="#dockfloat"/></svg>
                    <svg><use href="#dockclose"/></svg>
                </div>
                <div class="dock-tools proc-tools">
                    <b class="mini"><svg><use href="#procgear"/></svg></b>
                    <b class="mini"><svg><use href="#pydd"/></svg></b>
                    <b class="mini"><svg><use href="#clock"/></svg></b>
                    <b class="mini off"><svg><use href="#docsmall"/></svg></b>
                    <i class="sep slim"></i>
                    <b class="mini"><svg><use href="#note"/></svg></b>
                    <i class="sep slim"></i>
                    <b class="mini"><svg><use href="#wrench"/></svg></b>
                </div>
                <div class="searchbox">
                    <svg><use href="#search"/></svg>
                    <span>Search…</span>
                </div>
                <div class="algos">
                    <div class="algo-list">
                        <div class="algo"><i class="twist closed"></i><svg><use href="#clock"/></svg><span>Recently used</span></div>
                        <div class="algo"><i class="twist closed"></i><svg><use href="#qlogo"/></svg><span>Cartography</span></div>
                        <div class="algo"><i class="twist closed"></i><svg><use href="#qlogo"/></svg><span>Database</span></div>
                        <div class="algo"><i class="twist closed"></i><svg><use href="#qlogo"/></svg><span>File tools</span></div>
                        <div class="algo"><i class="twist closed"></i><svg><use href="#qlogo"/></svg><span>Graphics</span></div>
                        <div class="algo"><i class="twist closed"></i><svg><use href="#qlogo"/></svg><span>Interpolation</span></div>
                        <div class="algo"><i class="twist closed"></i><svg><use href="#qlogo"/></svg><span>Layer tools</span></div>
                        <div class="algo"><i class="twist closed"></i><svg><use href="#qlogo"/></svg><span>Network analysis</span></div>
                    </div>
                    <div class="vscroll">
                        <i class="arrow-up"></i>
                        <i class="vthumb"></i>
                        <i class="vgroove"></i>
                        <i class="arrow-down"></i>
                    </div>
                </div>
                <div class="hint">You can add more algorithms to the toolbox, <a>enable additional providers.</a> &nbsp;<a>[close]</a></div>
                <div class="split-h"></div>
                <div class="dock-title second">
                    <span>Identify Results</span>
                    <svg><use href="#dockfloat"/></svg>
                    <svg><use href="#dockclose"/></svg>
                </div>
                <div class="dock-tools ident-tools">
                    <b class="mini off"><svg><use href="#treeview"/></svg></b>
                    <i class="sep slim"></i>
                    <b class="mini"><svg><use href="#expand"/></svg></b>
                    <b class="mini"><svg><use href="#collapse"/></svg></b>
                    <b class="mini"><svg><use href="#starexp"/></svg></b>
                    <i class="sep slim"></i>
                    <b class="mini"><svg><use href="#deselect"/></svg></b>
                    <i class="sep slim"></i>
                    <b class="mini off"><svg><use href="#copy"/></svg></b>
                    <b class="mini off"><svg><use href="#print"/></svg></b>
                    <i class="sep slim"></i>
                    <b class="mini"><svg><use href="#selid"/></svg></b>
                    <i class="dd small"></i>
                    <b class="mini"><svg><use href="#wrench"/></svg></b>
                </div>
                <div class="results">
                    <div class="results-head">
                        <span class="col-feature">Feature</span>
                        <span>Value</span>
                    </div>
                </div>
                <div class="mode-row">
                    <label>Mode</label>
                    <div class="combo wide"><span>Current layer</span><i class="dd"></i></div>
                </div>
                <div class="view-row">
                    <label class="faded">View</label>
                    <div class="combo narrow faded"><span>Tree</span><i class="dd off"></i></div>
                    <div class="help-btn">Help</div>
                </div>
            </div>
        </div>

        <div class="statusbar">
            <div class="locator">
                <svg><use href="#search"/></svg>
                <span>Type to locate (Ctrl+K)</span>
            </div>
            <span class="lbl coord-lbl">Coordinate</span>
            <div class="field coord">138.5393,-35.3142</div>
            <svg class="st-icon mouse-ic"><use href="#mouse"/></svg>
            <span class="lbl scale-lbl">Scale</span>
            <div class="field scale"><span>1:75946</span><i class="dd"></i></div>
            <svg class="st-icon lock-ic"><use href="#lock"/></svg>
            <span class="lbl magn-lbl">Magnifier</span>
            <div class="field spin magn"><span>100%</span><em><i class="up"></i><i class="down"></i></em></div>
            <span class="lbl rot-lbl">Rotation</span>
            <div class="field spin rot"><span>0.0 °</span><em><i class="up"></i><i class="down"></i></em></div>
            <i class="check yes render-check">✔</i>
            <span class="lbl render-lbl">Render</span>
            <svg class="st-icon wgs-ic"><use href="#wgs"/></svg>
            <span class="lbl epsg">EPSG:4326</span>
            <svg class="st-icon chat-ic"><use href="#chat"/></svg>
            <i class="size-grip"></i>
        </div>
    </div>
</div>
</body>
</html>
```

FILE: styles.css
```css
* {
    margin: 0;
    padding: 0;
    box-sizing: border-box;
}

html, body {
    width: 1141px;
    height: 670px;
    overflow: hidden;
}

body {
    background: #212d33;
    font-family: "Noto Sans", sans-serif;
    font-size: 12.4px;
    color: #222;
}

.defs {
    display: block;
    width: 0;
    height: 0;
}

i, b {
    font-style: normal;
    font-weight: normal;
}

svg text {
    font-family: "Liberation Sans", sans-serif;
}

.t8b { font-size: 8.5px; font-weight: bold; fill: #222; }
.t8b.red { fill: #e02020; }
.t9 { font-size: 9px; fill: #111; letter-spacing: .6px; }
.t9b { font-size: 9px; font-weight: bold; fill: #222; }
.t9w { font-size: 9px; font-weight: bold; fill: #fff; }
.t11 { font-size: 12px; fill: #555; }
.t11w { font-size: 11px; font-weight: bold; fill: #fff; }
.t13 { font-size: 13px; fill: #555; }
.t14b { font-size: 18px; font-weight: bold; fill: #fff; }
.t18 { font-size: 20px; fill: #555; }
.ti { font-family: "Liberation Serif", serif; font-size: 16px; font-weight: bold; font-style: italic; fill: #fff; }

.window {
    width: 1141px;
    height: 670px;
    display: flex;
    flex-direction: column;
}

/* title bar */
.titlebar {
    height: 22px;
    display: flex;
    align-items: center;
    color: #5f6a70;
}

.logo {
    width: 16px;
    height: 16px;
    margin: 0 5px;
}

.title {
    flex: 1;
    text-align: center;
    font-size: 13px;
}

.wm {
    width: 95px;
    display: flex;
    align-items: center;
    position: relative;
    height: 22px;
    color: #8a949a;
}

.wm-up {
    margin-left: 5px;
    width: 0;
    height: 0;
    border-left: 5px solid transparent;
    border-right: 5px solid transparent;
    border-bottom: 5px solid #8a949a;
}

.wm-min {
    margin-left: 14px;
    margin-top: 9px;
    width: 10px;
    height: 2px;
    background: #8a949a;
}

.wm-max {
    margin-left: 14px;
    width: 10px;
    height: 10px;
    border: 2px solid #8a949a;
}

.wm-close {
    margin-left: 12px;
    font-size: 13px;
    line-height: 1;
}

/* app frame */
.app {
    flex: 1;
    margin-left: 1px;
    margin-bottom: 2px;
    background: #efefef;
    display: flex;
    flex-direction: column;
    min-height: 0;
}

.menubar {
    height: 21px;
    display: flex;
    padding-left: 2.600px;
    align-items: center;
    border-bottom: 1px solid #cfcfcf;
    background: #efefef;
}

.menubar span {
    padding: 0 7.400px;
}

.toolbar {
    height: 39px;
    flex: none;
    display: flex;
    align-items: center;
    background: linear-gradient(#f6f6f6, #ededed);
    border-bottom: 1px solid #bcbcbc;
}

.toolbar.short {
    height: 38px;
}

.tool {
    width: 33px;
    height: 31px;
    flex: none;
    display: flex;
    align-items: center;
    justify-content: center;
}

.tool svg {
    width: 24px;
    height: 24px;
}

.tool.on {
    background: #dcdcdc;
    border: 1px solid #b4b4b4;
    border-radius: 3px;
    margin: 0 1px;
    width: 31px;
}

.off {
    opacity: .3;
    filter: grayscale(1);
}

.grip {
    flex: none;
    width: 16px;
    height: 24px;
    background: radial-gradient(circle, #a8a8a8 .7px, transparent .9px) 0 0 / 3px 3px;
    background-clip: content-box;
    padding: 0 5px;
}

.grip.first {
    width: 13px;
    padding: 0 4px;
}

.grip.tiny {
    width: 14px;
}

.sep {
    flex: none;
    width: 7px;
    height: 24px;
    border-right: 3px solid transparent;
    border-left: 3px solid transparent;
    background: #cfcfcf;
    background-clip: padding-box;
}

.sep.slim {
    height: 17px;
}

.dd {
    flex: none;
    width: 11px;
    height: 5px;
    display: block;
    position: relative;
}

.dd::after {
    content: "";
    position: absolute;
    left: 1px;
    top: 0;
    border-left: 4px solid transparent;
    border-right: 4px solid transparent;
    border-top: 5px solid #444;
}

.dd.tight {
    width: 9px;
}

.more {
    margin-left: 7px;
    width: 22px;
    text-align: center;
    font-size: 14px;
    color: #444;
}

.more.mid {
    margin-left: 3px;
    width: 19px;
}

/* main area */
.main {
    flex: 1;
    display: flex;
    min-height: 0;
}

.dock {
    flex: none;
    display: flex;
    flex-direction: column;
}

.left-dock {
    width: 312px;
}

.right-dock {
    width: 338px;
}

.dock-title {
    height: 22px;
    flex: none;
    display: flex;
    align-items: center;
    gap: 2px;
    padding-left: 4px;
    padding-right: 2px;
}

.right-dock .dock-title {
    padding-left: 4px;
    padding-right: 2px;
    gap: 2px;
}

.dock-title span {
    flex: 1;
}

.dock-title svg {
    width: 12px;
    height: 12px;
}

.dock-tools {
    height: 26px;
    flex: none;
    display: flex;
    align-items: center;
}

.mini {
    width: 25px;
    height: 22px;
    flex: none;
    display: flex;
    align-items: center;
    justify-content: center;
}

.mini svg {
    width: 18px;
    height: 18px;
}

.layers-tools {
    padding-left: 3px;
}

.dd.small {
    width: 13px;
}

.proc-tools {
    padding-left: 2px;
}

.proc-tools .sep,
.ident-tools .sep {
    width: 7px;
}

.ident-tools {
    padding-left: 4px;
}

.layer-box {
    margin-top: 3px;
    margin-left: 1px;
    width: 310px;
    height: 399px;
    flex: none;
    background: #fff;
    border: 1px solid #bdbdbd;
    border-right-color: #c8c8c8;
    display: flex;
    flex-direction: column;
}

.layer-rows {
    flex: 1;
    min-height: 0;
    overflow: hidden;
}

.row {
    height: 18px;
    display: flex;
    align-items: center;
    white-space: nowrap;
    overflow: hidden;
}

.row.layer {
    border-right: 3px solid #eaeaea;
}

.twist {
    flex: none;
    display: block;
    width: 0;
    height: 0;
    margin-left: 5px;
    margin-right: 9px;
    border-left: 4px solid transparent;
    border-right: 4px solid transparent;
    border-top: 4px solid #444;
}

.notwist {
    flex: none;
    width: 22px;
}

.check {
    flex: none;
    width: 14px;
    height: 14px;
    background: #fff;
    border: 1px solid #b4b4b4;
    border-radius: 1px;
    font-size: 12px;
    line-height: 12px;
    text-align: center;
    color: #111;
}

.swatch {
    flex: none;
    width: 16px;
    height: 16px;
    margin-left: 7px;
    margin-right: 5px;
}

.swatch.outline {
    border: 2px solid #3f7bae;
    background: #fff;
}

.black {
    flex: none;
    width: 16px;
    height: 16px;
    background: #000;
    margin-left: 42px;
    margin-right: 6px;
}

.blank {
    flex: none;
    width: 64px;
}

.name {
    font-weight: bold;
}

.name.dim {
    font-style: italic;
    color: #7d7d7d;
}

.row.picked {
    background: #308cc6;
    color: #fff;
    border-right: 3px solid #308cc6;
    box-shadow: inset -1px 0 #fff;
}

.hscroll {
    height: 14px;
    flex: none;
    display: flex;
    align-items: center;
    border-top: 1px solid #c4c4c4;
    background: #eee;
}

.hthumb {
    width: 198px;
    height: 13px;
    background: #f8f8f8;
    border-left: 1px solid #ccc;
    margin-left: 1px;
}

.hgroove {
    width: 84px;
    height: 13px;
    background: #dedede;
}

.arrow-left {
    margin-left: 3px;
    border-top: 4px solid transparent;
    border-bottom: 4px solid transparent;
    border-right: 5px solid #555;
    margin-right: 4px;
}

.arrow-right {
    margin-left: 5px;
    border-top: 4px solid transparent;
    border-bottom: 4px solid transparent;
    border-left: 5px solid #555;
}

.tabs {
    display: flex;
    align-items: flex-start;
    padding-left: 1px;
}

.tab {
    height: 23px;
    margin-top: 2px;
    padding: 0 11px;
    line-height: 22px;
    background: #dcdcdc;
    border: 1px solid #c4c4c4;
    border-radius: 0 2px 2px 0;
}

.tab.active {
    height: 27px;
    margin-top: 0;
    padding-top: 3px;
    line-height: 24px;
    background: #efefef;
    border-top: 0;
    border-radius: 0 0 3px 3px;
}

.splitter {
    width: 6px;
    flex: none;
    display: flex;
    align-items: center;
    justify-content: center;
}

.splitter i {
    display: block;
    width: 2px;
    height: 12px;
    background: radial-gradient(circle, #aaa .7px, transparent .9px) 0 0 / 2px 3px;
}

.canvas {
    width: 478px;
    height: 478px;
    margin-top: 1px;
    flex: none;
    background: #fff;
    border: 1px solid #b8b8b8;
    position: relative;
    overflow: hidden;
}

.map {
    display: block;
    width: 476px;
    height: 476px;
}

.tiles {
    fill: #ef93b5;
    stroke: #8f8f8f;
    stroke-width: 1.200;
}

.grid {
    fill: none;
    stroke: #3f383e;
    stroke-width: 1;
    stroke-opacity: .9;
}

.study {
    fill: none;
    stroke: #8e6299;
    stroke-width: 3.200;
    stroke-linejoin: round;
    stroke-opacity: .92;
}

.mouse-cursor {
    position: absolute;
    left: 362px;
    top: 276px;
    width: 16px;
    height: 16px;
}

.mouse-cursor svg {
    display: block;
    width: 16px;
    height: 16px;
}

/* right dock */
.searchbox {
    margin-top: 4px;
    height: 22px;
    flex: none;
    display: flex;
    align-items: center;
    background: #fff;
    border: 1px solid #bcbcbc;
    border-radius: 3px;
    color: #808080;
}

.searchbox svg {
    width: 14px;
    height: 14px;
    margin-left: 8px;
    margin-right: 7px;
}

.algos {
    margin-top: 2px;
    height: 139px;
    flex: none;
    display: flex;
    background: #fff;
    border-left: 1px solid #c4c4c4;
    border-right: 1px solid #c4c4c4;
    overflow: hidden;
}

.algo-list {
    flex: 1;
    min-width: 0;
}

.algo {
    height: 18px;
    display: flex;
    align-items: center;
    white-space: nowrap;
}

.algo svg {
    width: 16px;
    height: 16px;
    margin-left: 11px;
    margin-right: 6px;
    flex: none;
}

.twist.closed {
    margin-left: 7px;
    margin-right: 0;
    border-top: 4px solid transparent;
    border-bottom: 4px solid transparent;
    border-left: 5px solid #444;
    border-right: 0;
}

.vscroll {
    width: 14px;
    flex: none;
    display: flex;
    flex-direction: column;
    align-items: center;
    border-left: 1px solid #cfcfcf;
    background: #e2e2e2;
}

.arrow-up,
.arrow-down {
    display: block;
    width: 100%;
    height: 13px;
    background: #f4f4f4;
    position: relative;
}

.arrow-up::after,
.arrow-down::after {
    content: "";
    position: absolute;
    left: 2px;
    top: 4px;
    border-left: 4px solid transparent;
    border-right: 4px solid transparent;
}

.arrow-up::after {
    border-bottom: 4px solid #555;
}

.arrow-down::after {
    border-top: 4px solid #555;
}

.vthumb {
    width: 100%;
    height: 34px;
    background: #fbfbfb;
    border-bottom: 1px solid #ccc;
    border-top: 1px solid #ccc;
}

.vgroove {
    flex: 1;
}

.hint {
    height: 36px;
    flex: none;
    padding: 2px 3px 0 4px;
    font-size: 12.200px;
    line-height: 15.500px;
    color: #fff;
    background: #55a6fb;
    border: 1px solid #3279c4;
}

.hint a {
    color: #0c2bd6;
    text-decoration: underline;
}

.split-h {
    height: 5px;
    flex: none;
}

.dock-title.second {
    height: 22px;
}

.results {
    margin-top: 2px;
    height: 105px;
    flex: none;
    background: #fff;
    border: 1px solid #bcbcbc;
}

.results-head {
    height: 20px;
    display: flex;
    align-items: center;
    background: linear-gradient(#f9f9f9, #e9e9e9);
    border-bottom: 1px solid #cfcfcf;
    padding-left: 2px;
    padding-top: 2px;
}

.col-feature {
    width: 98px;
    border-right: 1px solid #c4c4c4;
    line-height: 18px;
    margin-right: 2px;
}

.mode-row {
    display: flex;
    align-items: center;
    margin-top: 7px;
    height: 23px;
    padding-left: 5px;
}

.mode-row label {
    width: 39px;
}

.combo {
    display: flex;
    align-items: center;
    background: #f4f4f4;
    border: 1px solid #b8b8b8;
    border-radius: 3px;
    padding-left: 4px;
}

.combo span {
    flex: 1;
}

.combo .dd {
    margin-right: 5px;
}

.combo.wide {
    width: 288px;
    height: 23px;
}

.view-row {
    display: flex;
    align-items: center;
    margin-top: 7px;
    height: 24px;
    padding-left: 5px;
}

.view-row label {
    width: 36px;
}

.combo.narrow {
    width: 71px;
    height: 24px;
    opacity: 1;
    filter: none;
    color: #a8a8a8;
}

label.faded {
    color: #a8a8a8;
}

.help-btn {
    margin-left: 179px;
    width: 41px;
    height: 23px;
    line-height: 21px;
    text-align: center;
    background: #f4f4f4;
    border: 1px solid #b8b8b8;
    border-radius: 3px;
}

/* status bar */
.statusbar {
    height: 28px;
    flex: none;
    display: flex;
    align-items: center;
    padding-bottom: 2px;
    font-size: 10.600px;
    position: relative;
}

.locator {
    margin-left: 4px;
    width: 235px;
    height: 24px;
    display: flex;
    align-items: center;
    background: #fff;
    border: 1px solid #bcbcbc;
    border-radius: 3px;
    color: #808080;
    font-size: 12.400px;
}

.locator svg {
    width: 14px;
    height: 14px;
    margin-left: 7px;
    margin-right: 7px;
}

.lbl {
    flex: none;
    color: #333;
}

.field {
    flex: none;
    height: 22px;
    display: flex;
    align-items: center;
    background: #fff;
    border: 1px solid #bcbcbc;
    border-radius: 3px;
}

.coord-lbl {
    margin-left: 37px;
    width: 57px;
}

.coord {
    width: 113px;
    justify-content: center;
}

.st-icon {
    flex: none;
    width: 16px;
    height: 16px;
}

.mouse-ic { margin-left: 3px; }

.scale-lbl {
    margin-left: 14px;
    width: 29px;
}

.scale {
    width: 93px;
    padding-left: 3px;
    height: 23px;
}

.scale span {
    flex: 1;
}

.scale .dd {
    width: 20px;
    height: 100%;
    border-left: 1px solid #c8c8c8;
}

.scale .dd::after {
    left: 5px;
    top: 9px;
}

.lock-ic { margin-left: 10px; }

.magn-lbl {
    margin-left: 8px;
    width: 51px;
}

.spin {
    padding-left: 4px;
    height: 23px;
}

.spin span {
    flex: 1;
}

.spin em {
    width: 14px;
    height: 100%;
    display: flex;
    flex-direction: column;
    align-items: center;
    justify-content: center;
    gap: 3px;
    border-left: 1px solid #c8c8c8;
}

.up, .down {
    display: block;
    width: 0;
    height: 0;
    border-left: 4px solid transparent;
    border-right: 4px solid transparent;
}

.up { border-bottom: 4px solid #555; }
.down { border-top: 4px solid #555; }

.magn {
    width: 86px;
}

.rot-lbl {
    margin-left: 10px;
    width: 51px;
}

.rot {
    width: 88px;
}

.render-check { margin-left: 7px; }

.render-lbl {
    margin-left: 5px;
    width: 51px;
}

.epsg {
    margin-left: 3px;
    width: 60px;
}

.chat-ic { margin-left: 17px; }

.size-grip {
    position: absolute;
    right: 1px;
    bottom: 1px;
    width: 10px;
    height: 10px;
    background: radial-gradient(circle, #bbb .6px, transparent .8px) 0 0 / 3px 3px;
}
```
